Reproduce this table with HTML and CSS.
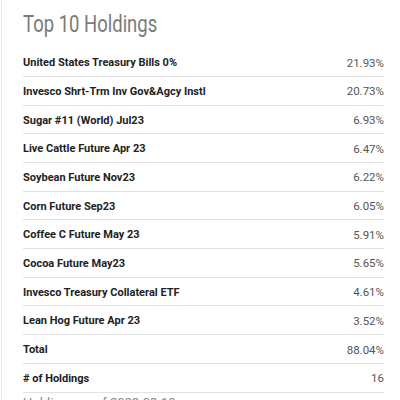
FILE: index.html
```html
<!DOCTYPE html>
<html>
<head>
<meta charset="utf-8">
<link rel="stylesheet" href="styles.css">
</head>
<body>
<div class="panel">
  <h2 class="title"><span class="squeeze">Top 10 Holdings</span></h2>
  <div class="rows">
    <div class="row"><span class="name">United States Treasury Bills 0%</span><span class="val">21.93%</span></div>
    <div class="row"><span class="name">Invesco Shrt-Trm Inv Gov&amp;Agcy Instl</span><span class="val">20.73%</span></div>
    <div class="row"><span class="name">Sugar #11 (World) Jul23</span><span class="val">6.93%</span></div>
    <div class="row"><span class="name">Live Cattle Future Apr 23</span><span class="val">6.47%</span></div>
    <div class="row"><span class="name">Soybean Future Nov23</span><span class="val">6.22%</span></div>
    <div class="row"><span class="name">Corn Future Sep23</span><span class="val">6.05%</span></div>
    <div class="row"><span class="name">Coffee C Future May 23</span><span class="val">5.91%</span></div>
    <div class="row"><span class="name">Cocoa Future May23</span><span class="val">5.65%</span></div>
    <div class="row"><span class="name">Invesco Treasury Collateral ETF</span><span class="val">4.61%</span></div>
    <div class="row"><span class="name">Lean Hog Future Apr 23</span><span class="val">3.52%</span></div>
    <div class="row"><span class="name">Total</span><span class="val">88.04%</span></div>
    <div class="row"><span class="name"># of Holdings</span><span class="val">16</span></div>
  </div>
  <p class="note">Holdings as of 2023-03-10</p>
</div>
</body>
</html>
```
FILE: styles.css
```css
html, body {
  margin: 0;
  padding: 0;
  background: #fff;
}
body {
  font-family: Roboto, "Liberation Sans", sans-serif;
  overflow: hidden;
}
.panel {
  margin-left: 1px;
  border-left: 1px solid #ececec;
  padding: 0 16px 0 21px;
  height: 400px;
  box-sizing: border-box;
}
.squeeze {
  display: inline-block;
  transform: scaleX(0.77);
  transform-origin: left center;
  white-space: nowrap;
}
.title {
  margin: 0;
  padding-top: 10px;
  height: 38.3px;
  font-size: 24px;
  line-height: 28px;
  font-weight: 400;
  color: #7a7a7a;
}
.row {
  display: flex;
  justify-content: space-between;
  align-items: center;
  height: 28.7px;
  box-sizing: border-box;
  padding-top: 1px;
  border-bottom: 1px solid #e2e2e2;
}
.name {
  font-size: 11px;
  font-weight: 700;
  color: #222;
}
.val {
  font-size: 11.5px;
  color: #555;
}
.note {
  margin: 0;
  padding-top: 2px;
  font-size: 13px;
  color: #888;
}
```
